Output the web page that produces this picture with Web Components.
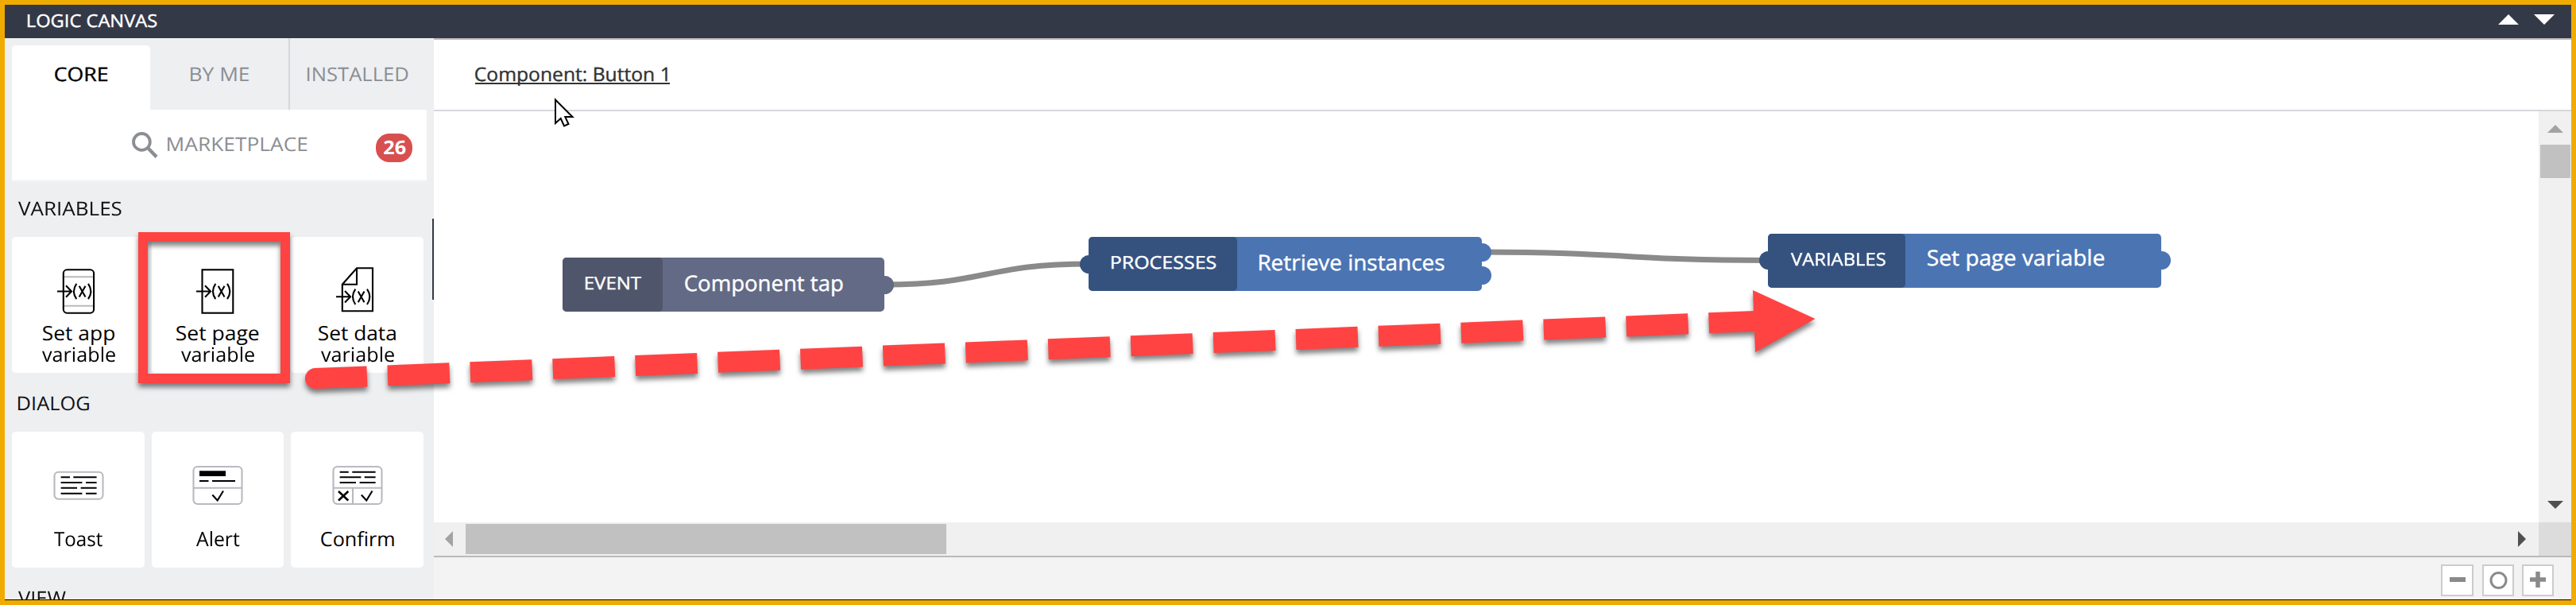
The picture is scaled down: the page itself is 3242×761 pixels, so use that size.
<!DOCTYPE html>
<html lang="en">
<head>
<meta charset="utf-8">
<title>Logic canvas</title>
<style>
html,body{margin:0;height:100%;overflow:hidden}
body{font-family:"Open Sans","Noto Sans",sans-serif;background:#f0ab00;text-rendering:geometricPrecision}
</style>
</head>
<body>
<logic-app></logic-app>
<script>
const define=(name,html,init)=>{
  const t=document.createElement('template');
  t.innerHTML=html;
  customElements.define(name,class extends HTMLElement{
    connectedCallback(){
      if(this.shadowRoot)return;
      this.attachShadow({mode:'open'}).appendChild(t.content.cloneNode(true));
      if(init)init(this,this.shadowRoot);
    }
  });
};

/* One line of text condensed to a given ink width: w = width, s = font size, b = weight */
const ctx=document.createElement('canvas').getContext('2d');
define('fit-text',`<style>
:host{display:block;flex:none;white-space:nowrap;line-height:1}
:host([firm]){-webkit-text-stroke:.4px currentColor}
span{display:inline-block;transform-origin:0 0;vertical-align:top}
</style><span><slot></slot></span>`,(el,root)=>{
  const w=+el.getAttribute('w'),s=+(el.getAttribute('s')||24),b=el.getAttribute('b')||400;
  el.style.cssText+=`;width:${w}px;height:${s}px;font-size:${s}px;font-weight:${b}`;
  const span=root.querySelector('span');
  ctx.font=`${b} ${s}px "Open Sans"`;
  const text=el.textContent.trim(),m=ctx.measureText(text);
  /* side bearings of the outer glyphs, taken from a large size so that they are not rounded */
  ctx.font=`${b} 1000px "Open Sans"`;
  const big=ctx.measureText(text);
  const left=-big.actualBoundingBoxLeft*s/1000,right=(big.width-big.actualBoundingBoxRight)*s/1000;
  const full=span.offsetWidth?span.getBoundingClientRect().width:m.width;
  const k=w/(full-left-right);
  span.style.transform=`translateX(${-left*k}px) scaleX(${k})`;
});

define('title-bar',`<style>
:host{display:flex;height:42px;background:#343948;color:#fff;box-sizing:border-box;padding:9px 21px 0 28.5px;justify-content:space-between}
svg{display:block;margin-top:3px}
</style>
<fit-text w="162.5" s="22" firm>LOGIC CANVAS</fit-text>
<svg width="71" height="13" fill="#fff"><path d="M0 13L13 0L26 13ZM45 0H71L58 13Z"/></svg>`);

define('tab-bar',`<style>
:host{display:grid;grid-template-columns:174px 174px 1fr;height:90px;color:#8b8e94}
div{box-sizing:border-box;padding-top:34px}
.core{background:#fff;color:#000;margin-top:9px;padding:25px 0 0 54px;border-radius:5px 5px 0 0}
.me{padding-left:51px}
.inst{border-left:2px solid #d5d7da;padding-left:22px}
</style>
<div class="core"><fit-text w="66" firm>CORE</fit-text></div>
<div class="me"><fit-text w="73">BY ME</fit-text></div>
<div class="inst"><fit-text w="126.5">INSTALLED</fit-text></div>`);

define('market-search',`<style>
:host{display:flex;width:522px;height:90px;box-sizing:border-box;background:#fff;border-bottom:2px solid #f5f6f7;padding:28px 18px 0 151px;color:#8b8e94}
.t{margin:4px 0 0 11px}
.badge{margin:2px 0 0 auto;width:46px;height:36px;border-radius:17px;background:#d84f50;color:#fff;box-sizing:border-box;padding:5.5px 0 0 9.5px}
</style>
<svg width="34" height="34" fill="none" stroke="#8b8e94"><circle cx="12.4" cy="12.4" r="10.4" stroke-width="3.8"/><path d="M20 20L31 31.4" stroke-width="4.4"/></svg>
<fit-text class="t" w="175.5">MARKETPLACE</fit-text>
<div class="badge"><fit-text w="27.5" b="700">26</fit-text></div>`);

define('flow-section',`<style>
:host{display:block;height:245px}
.label{height:48px;padding:1px 0 0 7.5px;box-sizing:border-box;color:#111}
.cards{display:grid;grid-template-columns:167px 166px 167px;gap:9px;height:171px}
</style>
<div class="label"><slot name="label"></slot></div>
<div class="cards"><slot></slot></div>`);

define('flow-card',`<style>
:host{display:flex;flex-direction:column;align-items:center;height:171px;background:#fff;border-radius:5px;box-sizing:border-box;padding-top:36px;color:#000}
.name{display:flex;flex-direction:column;gap:2px;align-items:center;margin-top:var(--name-gap,8.5px)}
</style>
<div class="icon"></div><div class="name"><slot></slot></div>`,(el,root)=>{
  const g='#b9b9c0',
  assign=dy=>`<g transform="translate(0 ${dy})"><path d="M5 32.5H23M16 25.3L23 32.5L16 39.7M29.3 22.8Q22.6 32.5 29.3 42.2M44 22.8Q50.7 32.5 44 42.2M32.7 25.8L40.5 39.5M40.5 25.8L32.7 39.5"/></g>`,
  box=(y,h)=>`<rect x="1.5" y="${y}" width="61" height="${h}" rx="5" stroke="${g}"/>`,
  icons={
    app:`<path d="M13 14.3H51M13 50.7H51" stroke="${g}"/><rect x="12.8" y="5.3" width="38.3" height="54.4" rx="4.5"/>${assign(0)}`,
    page:`<rect x="12.5" y="5.3" width="38.8" height="54.4"/>${assign(0)}`,
    data:`<path d="M31 3.3H51V57.3H12.8V23.7ZM31 3.3V23.7H12.8"/>${assign(6.8)}`,
    toast:box(14.7,34)+`<path d="M9.6 21.3H21M25.3 21.3H54.6M9.6 28H36.4M41 28H54.6M9.6 34.7H30M34.6 34.7H54.6M9.6 41.7H36.4M41 41.7H54.6"/>`,
    alert:box(8,47)+`<path d="M1 34.7H63" stroke="${g}"/><path d="M9 13.3H42V20H9Z" fill="#000" stroke="none"/><path d="M9 26H20.5M25 26H54M25.3 43.5L31.7 50.5L39 38.5"/>`,
    confirm:box(8,47)+`<path d="M1 34.7H63M26 34.7V55" stroke="${g}"/><path d="M9.6 14.7H20.7M25.3 14.7H54.6M9.6 21.3H36.4M40.7 21.3H54.6M9.6 28H30M34.6 28H54.6M36.8 43.5L43.2 50.5L50.5 38.5"/><path d="M8 39L20.3 50.5M20.3 39L8 50.5" stroke-width="2.6"/>`
  };
  root.querySelector('.icon').innerHTML=`<svg style="display:block" width="64" height="64" fill="none" stroke="#000" stroke-width="2.1">${icons[el.getAttribute('icon')]}</svg>`;
});

define('side-panel',`<style>
:host{display:block;position:relative;width:540px;height:706px;overflow:hidden;background:#eeeff1;box-sizing:border-box;padding:0 13px 0 9px}
tab-bar{margin-right:-4px}
.grip{position:absolute;right:0;top:227px;width:2px;height:102px;background:#343948}
flow-section:first-of-type{margin-top:22px}
.dialog{--name-gap:23px}
</style>
<tab-bar></tab-bar><market-search></market-search>
<flow-section>
<fit-text slot="label" w="130">VARIABLES</fit-text>
<flow-card icon="app"><fit-text w="90" s="25">Set app</fit-text><fit-text w="92" s="25">variable</fit-text></flow-card>
<flow-card icon="page"><fit-text w="103.5" s="25">Set page</fit-text><fit-text w="92" s="25">variable</fit-text></flow-card>
<flow-card icon="data"><fit-text w="97" s="25">Set data</fit-text><fit-text w="92" s="25">variable</fit-text></flow-card>
</flow-section>
<flow-section class="dialog">
<fit-text slot="label" w="89">DIALOG</fit-text>
<flow-card icon="toast"><fit-text w="61" s="25">Toast</fit-text></flow-card>
<flow-card icon="alert"><fit-text w="54.5" s="25">Alert</fit-text></flow-card>
<flow-card icon="confirm"><fit-text w="92" s="25">Confirm</fit-text></flow-card>
</flow-section>
<flow-section><fit-text slot="label" w="60">VIEW</fit-text></flow-section>
<div class="grip"></div>`);

/* Canvas node: "type" part and "title" part; ports are given as "x,y" pairs */
define('flow-node',`<style>
:host{position:absolute;display:flex;height:68px;border-radius:5px;background:var(--main);color:#fff}
.type{flex:none;box-sizing:border-box;height:68px;border-radius:5px;background:var(--dark);padding:21px 0 0 28.5px}
.title{padding:var(--title-top,18px) 0 0 28px}
i{position:absolute;width:23px;height:23px;border-radius:50%;margin:-11.5px;background:var(--main)}
i.in{background:var(--dark)}
</style>
<div class="type"><slot name="type"></slot></div><div class="title"><slot></slot></div>`,(el,root)=>{
  root.querySelector('.type').style.width=el.getAttribute('type-width')+'px';
  for(const p of el.getAttribute('ports').split(' ')){
    const [x,y]=p.split(',');
    const i=document.createElement('i');
    if(x==='0')i.className='in';
    i.style.left=x+'px';i.style.top=y+'px';
    root.prepend(i);
  }
});

define('flow-canvas',`<style>
:host{display:block;position:relative;background:#fff;overflow:hidden}
svg{position:absolute;left:0;top:0}
flow-node{--main:#4b74b3;--dark:#35527f}
.ev{--main:#626a85;--dark:#4f566b}
</style>
<svg width="2649" height="517" fill="none" stroke="#8a8a8a" stroke-width="7"><path d="M567 218C695 218 695 192 824 192M1319 177C1499 177 1499 187.5 1679 187.5"/></svg>
<flow-node class="ev" style="left:162px;top:184px;width:405px" type-width="126" ports="405,34">
<fit-text slot="type" w="70" s="22" firm>EVENT</fit-text><fit-text w="198.5" s="27" firm>Component tap</fit-text></flow-node>
<flow-node style="left:824px;top:158px;width:495px" type-width="187" ports="0,34 495,19 495,48.5">
<fit-text slot="type" w="131.5" s="22" firm>PROCESSES</fit-text><fit-text w="232.5" s="27" firm>Retrieve instances</fit-text></flow-node>
<flow-node style="left:1679px;top:153.5px;width:495px;--title-top:16.5px" type-width="173" ports="0,34 495,34">
<fit-text slot="type" w="119" s="22" firm>VARIABLES</fit-text><fit-text w="222" s="27" firm>Set page variable</fit-text></flow-node>`);

define('v-scroll',`<style>:host{display:flex;flex-direction:column;align-items:center;background:#f0f0f0;padding-left:1px}
.thumb{width:38px;height:42px;margin:15px 0 auto;background:#c1c1c1}svg{display:block;margin-top:17px}svg:last-child{margin:0 0 17px}</style>
<svg width="20" height="10"><path d="M0 10L10 0L20 10Z" fill="#a3a3a3"/></svg><div class="thumb"></div><svg width="20" height="10"><path d="M0 0H20L10 10Z" fill="#505050"/></svg>`);
define('h-scroll',`<style>:host{display:flex;align-items:center;background:#f0f0f0;padding:0 16px 0 14px}
.thumb{width:605px;height:38px;margin:0 auto 0 16px;background:#c1c1c1}</style>
<svg width="10" height="20"><path d="M10 0L0 10L10 20Z" fill="#a3a3a3"/></svg><div class="thumb"></div><svg width="10" height="20"><path d="M0 0L10 10L0 20Z" fill="#505050"/></svg>`);

define('zoom-bar',`<style>
:host{display:flex;justify-content:flex-end;gap:10.5px;background:#f3f3f3;border-top:2px solid #b9bab9;padding:9px 22px 0 0;box-sizing:border-box;height:55px}
svg{width:36px;height:36px;border:2px solid #ccc;background:#fff;fill:none;stroke:#8a8a8a}
svg:first-of-type{width:37px}
</style>
<svg><path d="M9 17H29" stroke-width="6"/></svg>
<svg><circle cx="18.5" cy="18" r="9.5" stroke-width="3"/></svg>
<svg><path d="M8 17H28M18 7V27" stroke-width="5.5"/></svg>`);

define('work-area',`<style>
:host{display:grid;flex:1;grid-template:92px 517px 42px 55px/1fr 41px;position:relative}
.head{grid-column:1/3;box-sizing:border-box;background:#fff;border-top:2px solid #bab9be;border-bottom:2px solid #d8d7dc;padding:32px 0 0 51.5px;color:#333}
.u{border-bottom:2px solid #333;width:245px;height:24px;box-sizing:border-box}
.corner{background:#dcdcdc}
zoom-bar{grid-column:1/3}
.cur{position:absolute;left:151px;top:73px}
</style>
<div class="head"><div class="u"><fit-text w="241.5" firm>Component: Button 1</fit-text></div></div>
<flow-canvas></flow-canvas><v-scroll></v-scroll>
<h-scroll></h-scroll><div class="corner"></div>
<zoom-bar></zoom-bar>
<svg class="cur" width="28" height="40"><path d="M2 4.5V34L8.7 28L13 37.5L18.5 35L14.3 26H23.5Z" fill="#fff" stroke="#000" stroke-width="2"/></svg>`);

define('red-marks',`<style>:host{position:absolute;left:0;top:0;pointer-events:none}svg{display:block;filter:drop-shadow(0 5px 3px rgba(0,0,0,.5))}</style>
<svg width="2400" height="560" fill="#ff4343"><rect x="180" y="298" width="179" height="178" fill="none" stroke="#ff4343" stroke-width="12"/>
<g transform="translate(384 476.5) rotate(-2.275)"><path d="M13 -13H78V13H13A13 13 0 0 1 13 -13Z"/><path d="M104 0H1826" stroke="#ff4343" stroke-width="26" stroke-dasharray="78 26"/><path d="M1825 -39L1902 0L1825 39Z"/></g></svg>`);

define('logic-app',`<style>
:host{display:block;position:relative;width:3242px;height:761px;box-sizing:border-box;border:6px solid #f0ab00;overflow:hidden}
main{display:flex;height:706px}
.end{height:1px;background:#000}
red-marks{margin:-6px 0 0 -6px}
</style>
<title-bar></title-bar><main><side-panel></side-panel><work-area></work-area></main><div class="end"></div><red-marks></red-marks>`);
</script>
</body>
</html>
